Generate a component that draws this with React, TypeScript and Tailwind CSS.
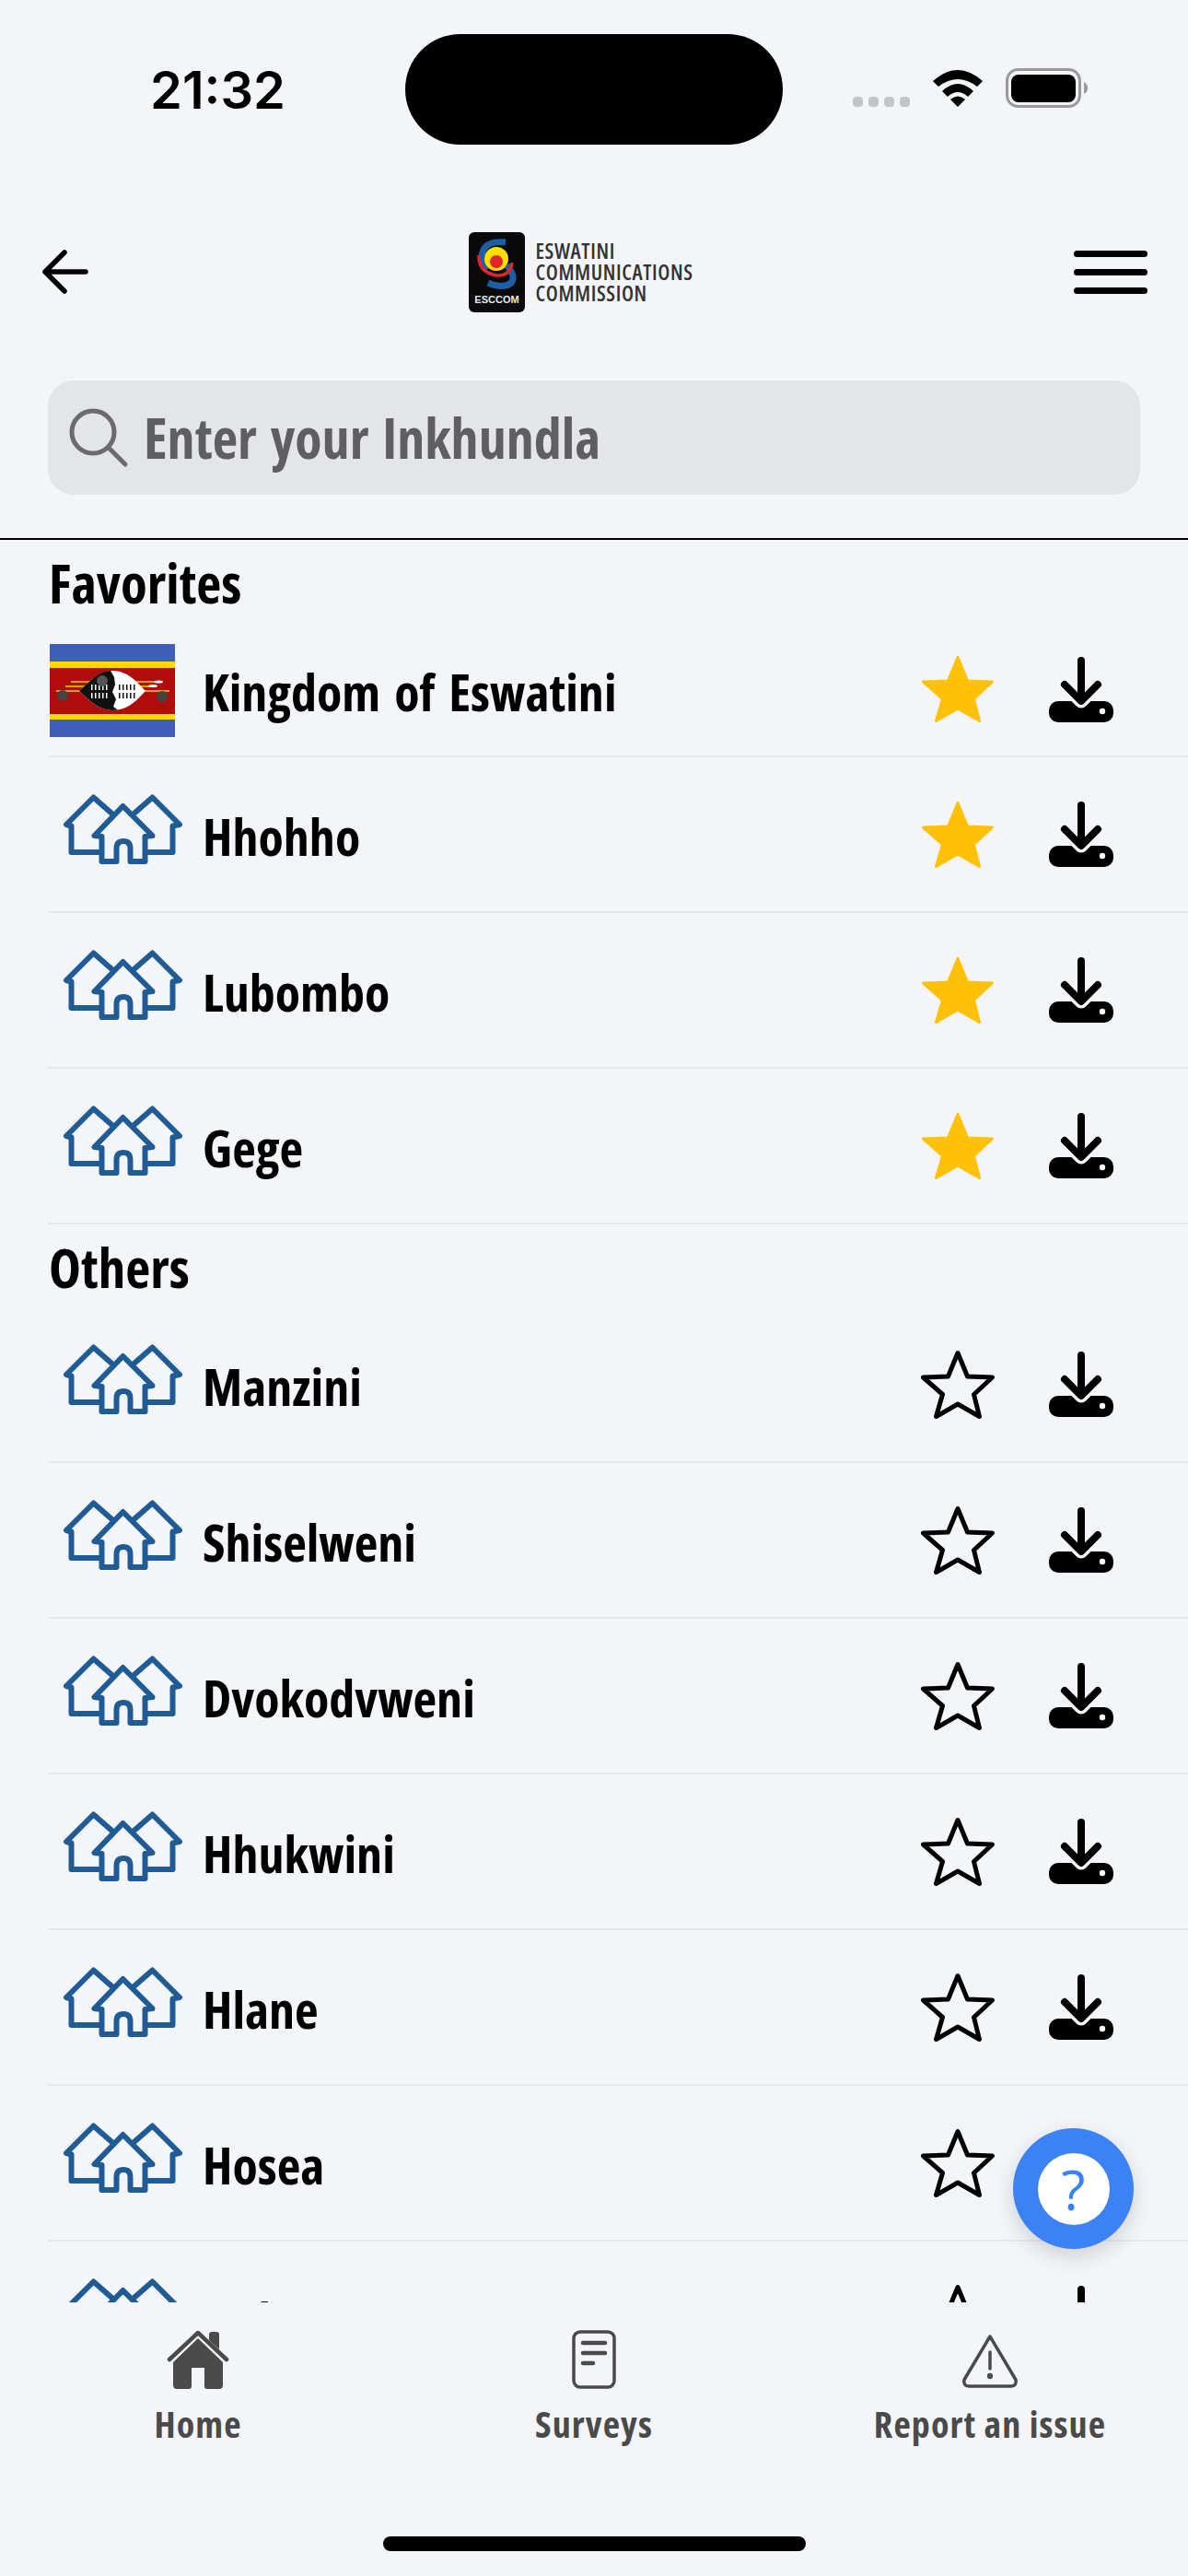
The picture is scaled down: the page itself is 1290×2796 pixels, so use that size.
import React from "react";

const font = "font-['Open_Sans',sans-serif] font-stretch-[75%] font-bold";

function Star({ filled }: { filled: boolean }) {
  return (
    <svg width="82" height="77" viewBox="-1.5 -1.5 82 77" className="block">
      <polygon
        points="39.5,2 50,27.5 77,28.5 57,47 63,71 39.5,57.5 16,71 23,47 2,28.5 29,27.5"
        fill={filled ? "#ffc107" : "none"}
        stroke={filled ? "#ffc107" : "#000"}
        strokeWidth={filled ? 3 : 5}
        strokeLinejoin="round"
      />
    </svg>
  );
}

function Download() {
  return (
    <svg width="70" height="72" viewBox="0 0 70 72" className="block">
      <rect x="0" y="48" width="70" height="23" rx="10" fill="#000" />
      <path d="M17 30 L35 48 L53 30" fill="none" stroke="#f4f5f9" strokeWidth="15" strokeLinecap="round" strokeLinejoin="round" />
      <path d="M35 4 V46 M17 30 L35 48 L53 30" fill="none" stroke="#000" strokeWidth="8" strokeLinecap="round" strokeLinejoin="round" />
      <circle cx="58" cy="59" r="3.2" fill="#fff" />
    </svg>
  );
}

function Houses() {
  return (
    <svg width="131" height="77" viewBox="-1.5 -1 131 77" fill="none" stroke="#1f5b94" strokeWidth="6" strokeLinejoin="round" strokeLinecap="round" className="block">
      <path d="M52 20 L32 2.5 L2.5 32 L8 33.5 V62 H40" />
      <path d="M76 20 L96 2.5 L125.5 32 L118 33.5 V62 H89" />
      <path d="M64 12 L33 44 L41 45 V72 H57 V58 Q57 50 64.5 50 Q72 50 72 58 V72 H88 V45 L96 44 Z" />
    </svg>
  );
}

function Flag() {
  return (
    <svg width="136" height="101" viewBox="0 0 136 101" className="block">
      <rect width="136" height="101" fill="#3e5eb9" />
      <rect y="19" width="136" height="63" fill="#ffd900" />
      <rect y="26" width="136" height="50" fill="#b10c0c" />
      <g stroke="#d4a017" strokeWidth="2">
        <path d="M7 51 H130" />
        <path d="M23 41 H118" />
        <path d="M17 46 H112" />
      </g>
      <ellipse cx="118" cy="41" rx="5" ry="1.6" fill="#fff" />
      <ellipse cx="112" cy="45.5" rx="5" ry="1.6" fill="#fff" />
      <path d="M32 51 C44 40 54 29 68 29 C84 29 94 40 104 51 C94 62 84 72 68 72 C54 72 44 62 32 51 Z" fill="#fff" />
      <path d="M32 51 C44 40 54 29 66 29 L70 36 L71 44 L68 52 L72 60 L69 68 L74 71.5 L68 72 C54 72 44 62 32 51 Z" fill="#111" />
      <g fill="#fff">
        <path d="M45 44 h1.5 v6 h-1.5z M49 44 h1.5 v6 h-1.5z M53 44 h1.5 v6 h-1.5z M57 44 h1.5 v6 h-1.5z M61 44 h1.5 v6 h-1.5z" />
        <path d="M45 53 h1.5 v6 h-1.5z M49 53 h1.5 v6 h-1.5z M53 53 h1.5 v6 h-1.5z M57 53 h1.5 v6 h-1.5z M61 53 h1.5 v6 h-1.5z" />
      </g>
      <g fill="#111">
        <path d="M75 44 h1.5 v6 h-1.5z M79 44 h1.5 v6 h-1.5z M83 44 h1.5 v6 h-1.5z M87 44 h1.5 v6 h-1.5z M91 44 h1.5 v6 h-1.5z" />
        <path d="M75 53 h1.5 v6 h-1.5z M79 53 h1.5 v6 h-1.5z M83 53 h1.5 v6 h-1.5z M87 53 h1.5 v6 h-1.5z M91 53 h1.5 v6 h-1.5z" />
      </g>
      <circle cx="14" cy="56" r="6" fill="#444" />
      <circle cx="122" cy="57" r="6" fill="#444" />
      <circle cx="57" cy="40" r="6" fill="#555" />
    </svg>
  );
}

function Row({ name, fav, kind }: { name: string; fav: boolean; kind?: "flag" }) {
  return (
    <div className={`flex items-center ml-[52px] border-b-2 border-[#e6e7ea] shrink-0 ${kind === "flag" ? "h-[146px]" : "h-[169px]"}`}>
      {kind === "flag" ? (
        <div className="w-[168px] pl-[2px] pt-[2px]"><Flag /></div>
      ) : (
        <div className="w-[168px] pl-[16px] mb-[10px]"><Houses /></div>
      )}
      <div className={`${font} text-[56px] leading-none text-black pt-[3px] [word-spacing:5px]`}>{name}</div>
      <div className="ml-auto mr-[81px] flex items-center gap-[58px] pt-[1px]">
        <Star filled={fav} />
        <Download />
      </div>
    </div>
  );
}

function Heading({ children }: { children: string }) {
  return <div className={`${font} text-[59px] leading-none text-black h-[90px] pl-[53px] pt-[17px] shrink-0`}>{children}</div>;
}

function Tab({ label, children }: { label: string; children: React.ReactNode }) {
  return (
    <div className="flex-1 flex flex-col items-center">
      <div className="h-[70px] flex items-end">{children}</div>
      <div className={`${font} text-[40px] leading-none tracking-[1.1px] text-[#4a4a4a] mt-[18px]`}>{label}</div>
    </div>
  );
}

export default function App() {
  return (
    <div className="relative w-[1290px] h-[2796px] bg-[#f4f5f9] overflow-hidden flex flex-col">
      {/* status bar */}
      <div className="h-[245px] shrink-0 pt-[37px] flex items-start">
        <div className="w-[440px] pl-[163px] pt-[31px] font-['Inter',sans-serif] font-semibold text-[56px] leading-[60px] text-black">21:32</div>
        <div className="w-[410px] h-[120px] rounded-[60px] bg-black" />
        <div className="ml-[76px] pt-[37px] flex items-end gap-[24px]">
          <div className="flex gap-[6px] mb-[1px]">
            <span className="w-[11px] h-[11px] rounded-[4px] bg-[#c4c5c8]" />
            <span className="w-[11px] h-[11px] rounded-[4px] bg-[#c4c5c8]" />
            <span className="w-[11px] h-[11px] rounded-[4px] bg-[#c4c5c8]" />
            <span className="w-[11px] h-[11px] rounded-[4px] bg-[#c4c5c8]" />
          </div>
          <svg width="56" height="42" viewBox="0 0 56 42" className="block">
            <path d="M1 13 Q28 -11 55 13 L49 19 Q28 3 7 19 Z" fill="#000" />
            <path d="M11 24 Q28 8 45 24 L39 30 Q28 20 17 30 Z" fill="#000" />
            <path d="M20 33 Q28 26 36 33 L28 41 Z" fill="#000" />
          </svg>
          <svg width="90" height="43" viewBox="0 0 90 43" className="block">
            <rect x="1.5" y="1.5" width="79" height="40" rx="12" fill="none" stroke="#9a9a9c" strokeWidth="3" />
            <rect x="6" y="7" width="70" height="30" rx="8" fill="#000" />
            <path d="M85 15 Q89 17 89 21.5 Q89 26 85 28 Z" fill="#9a9a9c" />
          </svg>
        </div>
      </div>

      {/* header */}
      <div className="h-[100px] shrink-0 flex items-center justify-between pl-[46px] pr-[44px]">
        <svg width="50" height="48" viewBox="0 0 50 48" fill="none" stroke="#000" strokeWidth="5.5" strokeLinecap="round" strokeLinejoin="round" className="block">
          <path d="M24 3 L3 24 L24 45 M3 24 H47" />
        </svg>
        <div className="flex items-center gap-[11px]">
          <svg width="61" height="87" viewBox="0 0 61 87" className="block">
            <rect width="61" height="87" rx="6" fill="#0a0a0a" />
            <path d="M40 11 Q14 8 14 29 Q14 37 20 41" fill="none" stroke="#1b5fa8" strokeWidth="7" />
            <path d="M41 36 Q52 48 46 55 Q38 62 21 55" fill="none" stroke="#1b5fa8" strokeWidth="7" />
            <path d="M11 25 Q10 43 30 47 Q45 48 47 33" fill="none" stroke="#e0252b" strokeWidth="3.5" />
            <circle cx="30" cy="29" r="13" fill="#ffdf00" />
            <circle cx="30" cy="32" r="7" fill="#e0252b" />
            <text x="30.5" y="77" textAnchor="middle" fontFamily="'Liberation Sans',sans-serif" fontWeight="700" fontSize="11" fill="#e8e8e8">ESCCOM</text>
          </svg>
          <div className="font-['Open_Sans',sans-serif] font-stretch-[75%] font-semibold text-[23px] leading-[23px] tracking-[0.6px] text-[#333]">
            <div>ESWATINI</div>
            <div>COMMUNICATIONS</div>
            <div>COMMISSION</div>
          </div>
        </div>
        <div className="flex flex-col gap-[13px] w-[80px]">
          <span className="h-[7px] rounded-full bg-black" />
          <span className="h-[7px] rounded-full bg-black" />
          <span className="h-[7px] rounded-full bg-black" />
        </div>
      </div>

      {/* search */}
      <div className="mt-[68px] mx-[52px] h-[124px] shrink-0 rounded-[28px] bg-[#e4e5e7] flex items-center pl-[22px] gap-[16px]">
        <svg width="66" height="66" viewBox="0 0 66 66" fill="none" stroke="#6b6b6d" strokeWidth="5" strokeLinecap="round" className="block">
          <circle cx="27" cy="27" r="23" />
          <path d="M44 44 L62 62" />
        </svg>
        <div className={`${font} text-[60px] leading-none [word-spacing:4px] text-[#5f5f61]`}>Enter your Inkhundla</div>
      </div>

      <div className="mt-[47px] h-[2px] shrink-0 bg-black" />

      {/* list */}
      <div className="h-[1913px] shrink-0 overflow-hidden flex flex-col">
        <Heading>Favorites</Heading>
        <Row name="Kingdom of Eswatini" fav kind="flag" />
        <Row name="Hhohho" fav />
        <Row name="Lubombo" fav />
        <Row name="Gege" fav />
        <Heading>Others</Heading>
        <Row name="Manzini" fav={false} />
        <Row name="Shiselweni" fav={false} />
        <Row name="Dvokodvweni" fav={false} />
        <Row name="Hhukwini" fav={false} />
        <Row name="Hlane" fav={false} />
        <Row name="Hosea" fav={false} />
        <Row name="Hukwe" fav={false} />
      </div>

      {/* tabs */}
      <div className="flex pt-[24px]">
        <Tab label="Home">
          <svg width="68" height="64" viewBox="0 0 68 64" className="block">
            <path d="M3 32 L34 3 L65 32" fill="none" stroke="#4a4a4a" strokeWidth="4.5" strokeLinecap="round" strokeLinejoin="round" />
            <path d="M46 5 Q46 2 49 2 H54 Q57 2 57 5 V21 L46 11 Z" fill="#4a4a4a" />
            <path d="M34 9 L61 35 V60 Q61 64 57 64 H44 Q41 64 41 61 V41 H27 V61 Q27 64 24 64 H11 Q7 64 7 60 V35 Z" fill="#4a4a4a" />
          </svg>
        </Tab>
        <Tab label="Surveys">
          <svg width="48" height="64" viewBox="0 0 48 64" fill="none" stroke="#4a4a4a" strokeWidth="3.5" strokeLinecap="round" className="block">
            <rect x="2" y="2" width="44" height="60" rx="7" />
            <path d="M12 14 H36 M12 25 H36 M12 36 H23" strokeWidth="4.5" />
          </svg>
        </Tab>
        <Tab label="Report an issue">
          <svg width="62" height="60" viewBox="0 0 62 60" fill="none" stroke="#4a4a4a" strokeWidth="3.5" strokeLinejoin="round" strokeLinecap="round" className="block">
            <path d="M31 3 L59 50 Q60 57 54 57 H8 Q2 57 3 50 Z" />
            <path d="M31 20 V38" />
            <circle cx="31" cy="46" r="1.4" />
          </svg>
        </Tab>
      </div>

      {/* home indicator */}
      <div className="absolute left-[416px] top-[2753px] w-[459px] h-[16px] rounded-full bg-black" />

      {/* help fab */}
      <div className="absolute left-[1100px] top-[2310px] w-[131px] h-[131px] rounded-full bg-[#3b82f6] shadow-[0_8px_24px_rgba(0,0,0,0.15)] flex items-center justify-center">
        <div className="w-[78px] h-[78px] rounded-full bg-white flex items-center justify-center font-['Open_Sans',sans-serif] font-medium text-[60px] leading-none text-[#3b82f6]">?</div>
      </div>
    </div>
  );
}
